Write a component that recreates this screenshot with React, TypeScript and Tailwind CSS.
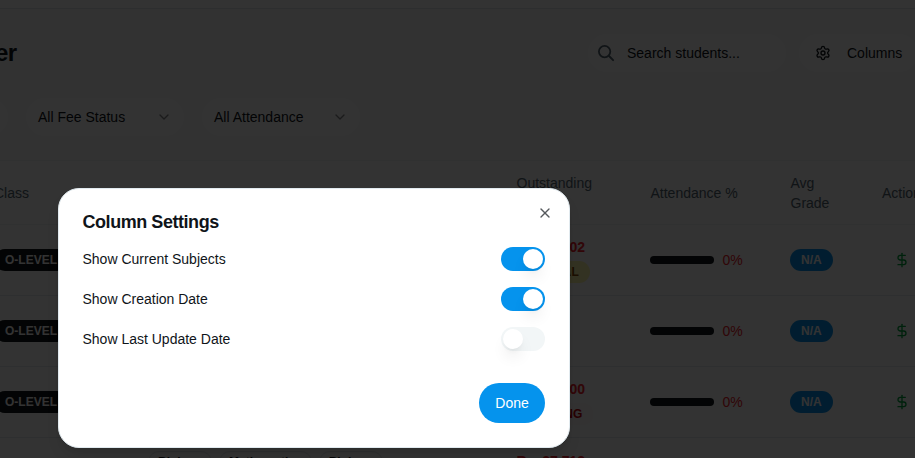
import React from "react";
import { ChevronDown, DollarSign, Settings, X } from "lucide-react";

type Row = { amount: string; status: string; tone: string };

const rows: Row[] = [
  { amount: "Rs. 27,702", status: "PARTIAL", tone: "bg-[#fef9a8] text-[#894b00]" },
  { amount: "Rs. 0", status: "PAID", tone: "bg-[#dcfce7] text-[#016630]" },
  { amount: "Rs. 32,500", status: "PENDING", tone: "bg-[#fcf8f8] text-[#c10007]" },
];

const columns =
  "grid grid-cols-[147px_275px_93px_134px_140px_92px_200px] items-center pl-[152px]";

function SearchIcon({ className }: { className: string }) {
  return (
    <svg
      viewBox="0 0 20 20"
      fill="none"
      stroke="currentColor"
      strokeWidth="1.8"
      strokeLinecap="round"
      className={className}
    >
      <circle cx="8.6" cy="8.6" r="5.7" />
      <path d="M12.8 12.8l4.3 4.3" strokeWidth="2" />
    </svg>
  );
}

function FilterSelect({ label }: { label: string }) {
  return (
    <div className="flex h-10 w-40 shrink-0 items-center justify-between rounded-[20px] border border-[#f9fafb] bg-white px-3">
      <span>{label}</span>
      <ChevronDown className="size-4 opacity-50" />
    </div>
  );
}

function Badge({ children, className }: { children: React.ReactNode; className: string }) {
  return (
    <span
      className={
        "inline-flex h-[22px] items-center rounded-full px-[11px] text-xs font-bold leading-4 " +
        className
      }
    >
      {children}
    </span>
  );
}

function Subject({ name }: { name: string }) {
  return (
    <span className="inline-flex h-[22px] items-center rounded-full border border-[#e1e8ed] px-[9px] text-xs font-bold leading-4">
      {name}
    </span>
  );
}

function StudentRow({ row }: { row: Row }) {
  return (
    <div className={columns + " h-[71px] border-b border-[#e6ebef]"}>
      <div className="-ml-[7px]">
        <Badge className="bg-[#0f1419] text-white">O-LEVEL</Badge>
      </div>
      <div />
      <div />
      <div className="flex flex-col items-start gap-1">
        <span className="pl-[0.5px] font-bold leading-5 text-[#f3202b]">{row.amount}</span>
        <Badge className={"tracking-[0.1px] " + row.tone}>{row.status}</Badge>
      </div>
      <div className="flex items-center gap-2">
        <div className="h-2 w-16 rounded-full bg-[#0f1419]" />
        <span className="pl-[0.5px] text-[#f3202b]">0%</span>
      </div>
      <div>
        <Badge className="bg-[#0593ed] text-white">N/A</Badge>
      </div>
      <div className="pl-3">
        <DollarSign className="size-4 text-[#00a63e]" />
      </div>
    </div>
  );
}

function Toggle({ on }: { on: boolean }) {
  return (
    <div
      className={
        "flex h-6 w-11 items-center rounded-full p-0.5 " +
        (on ? "justify-end bg-[#0593ed]" : "justify-start bg-[#f2f6f7]")
      }
    >
      <div className="size-5 rounded-full bg-white shadow-lg" />
    </div>
  );
}

function SettingRow({ label, on }: { label: string; on: boolean }) {
  return (
    <div className="flex h-6 items-center justify-between">
      <span>{label}</span>
      <Toggle on={on} />
    </div>
  );
}

function Page() {
  return (
    <div className="-ml-[151px] w-[1232px] shrink-0">
      <div className="h-[9px] border-b border-[#e1e6ea] bg-[#fcfcfc]" />
      <div className="flex h-[88px] items-center">
        <h1 className="w-[738px] text-2xl font-bold tracking-tight">Student Ledger</h1>
        <div className="flex h-10 w-[200px] shrink-0 items-center rounded-[20px] border border-[#f9fafb] bg-white pl-[8px]">
          <SearchIcon className="size-5 text-[#536471]" />
          <span className="pl-[11px]">Search students...</span>
        </div>
        <div className="ml-[11px] flex h-10 shrink-0 items-center gap-4 rounded-[20px] border border-[#f9fafb] bg-white px-4">
          <Settings className="size-4" />
          <span>Columns</span>
        </div>
      </div>
      <div className="flex gap-4">
        <FilterSelect label="All Classes" />
        <FilterSelect label="All Fee Status" />
        <FilterSelect label="All Attendance" />
      </div>
      <div className="mt-[23px] border-t border-[#f0f2f4] bg-[#fcfcfc]">
        <div className={columns + " h-16 border-b border-[#f1f3f5] leading-5 text-[#536471]"}>
          <div className="-ml-[7px]">Class</div>
          <div className="pt-[2px]">Current Subjects</div>
          <div className="pt-[2px]">Created</div>
          <div className="pl-[0.5px]">
            Outstanding
            <br />
            Dues
          </div>
          <div className="pl-[0.5px]">Attendance %</div>
          <div className="pl-[0.5px]">
            Avg
            <br />
            Grade
          </div>
          <div>Actions</div>
        </div>
        {rows.map((row) => (
          <StudentRow key={row.amount} row={row} />
        ))}
        <div className={columns + " h-[71px]"}>
          <div />
          <div className="flex gap-[7px] pb-[23px]">
            <Subject name="Biology" />
            <Subject name="Mathematics" />
            <Subject name="Biology" />
          </div>
          <div />
          <div className="pb-[26px] pl-[0.5px] font-bold leading-5 text-[#f3202b]">Rs. 27,712</div>
        </div>
      </div>
    </div>
  );
}

export default function App() {
  return (
    <div className="relative h-[458px] w-[915px] overflow-hidden bg-[#fafafa] font-['Liberation_Sans',Arial,sans-serif] text-sm text-[#0f1419]">
      <Page />
      <div className="absolute inset-0 bg-black/80" />
      <div className="absolute left-[58px] top-[188px] flex h-[260px] w-[512px] flex-col rounded-[21px] border border-[#e1eaef] bg-white py-6 pl-[23.5px] pr-6 shadow-lg">
        <h2 className="text-lg font-bold leading-[18px] tracking-tight">Column Settings</h2>
        <div className="mt-4 flex flex-col gap-4">
          <SettingRow label="Show Current Subjects" on />
          <SettingRow label="Show Creation Date" on />
          <SettingRow label="Show Last Update Date" on={false} />
        </div>
        <button className="mt-8 flex h-10 w-[66px] items-center justify-center self-end rounded-[20px] bg-[#0593ed] text-white">
          Done
        </button>
        <X className="absolute right-4 top-4 size-4 opacity-70" />
      </div>
    </div>
  );
}
